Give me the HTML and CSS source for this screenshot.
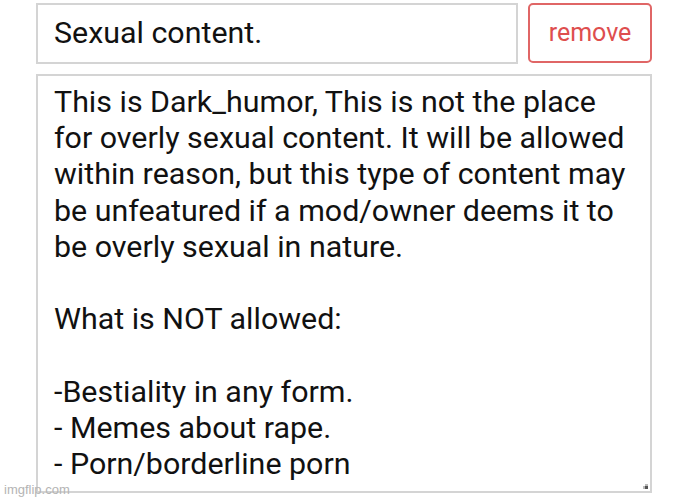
FILE: index.html
```html
<!DOCTYPE html>
<html>
<head>
<meta charset="utf-8">
<link rel="stylesheet" href="styles.css">
</head>
<body>
<div class="page">
  <div class="row">
    <div class="field">Sexual content.</div>
    <div class="remove">remove</div>
  </div>
  <div class="area">This is Dark_humor, This is not the place
for overly sexual content. It will be allowed
within reason, but this type of content may
be unfeatured if a mod/owner deems it to
be overly sexual in nature.

What is NOT allowed:

-Bestiality in any form.
- Memes about rape.
- Porn/borderline porn<span class="grip"></span></div>
</div>
<div class="watermark">imgflip.com</div>
</body>
</html>
```

FILE: styles.css
```css
html, body {
  margin: 0;
  padding: 0;
  background: #ffffff;
}
body {
  width: 689px;
  height: 500px;
  position: relative;
  overflow: hidden;
  font-family: Roboto, "Noto Sans", sans-serif;
  color: #111111;
}
.page {
  padding: 3px 37px 0 36px;
  display: flex;
  flex-direction: column;
  gap: 10px;
}
.row {
  display: flex;
  gap: 10px;
  height: 61px;
}
.field {
  flex: 1;
  border: 2px solid #d4d4d4;
  display: flex;
  align-items: center;
  padding: 0 0 0 16px;
  font-size: 30.4px;
  line-height: 1;
  box-sizing: border-box;
}
.remove {
  width: 124px;
  height: 60px;
  box-sizing: border-box;
  border: 2px solid #e06666;
  border-radius: 5px;
  color: #de4e4e;
  font-size: 25px;
  display: flex;
  align-items: center;
  justify-content: center;
  padding-bottom: 2px;
}
.area {
  position: relative;
  height: 419px;
  box-sizing: border-box;
  border: 2px solid #d4d4d4;
  padding: 8px 16px 0 16px;
  font-size: 30.4px;
  line-height: 36.2px;
  white-space: pre;
  overflow: hidden;
}
.grip {
  position: absolute;
  right: 2px;
  bottom: 2px;
  width: 3px;
  height: 3px;
  background: #555555;
  box-shadow: -2px 0 0 #bbbbbb, 0 -2px 0 #bbbbbb;
}
.watermark {
  position: absolute;
  left: 4px;
  top: 482px;
  font-family: "Liberation Sans", Arial, sans-serif;
  font-size: 13px;
  color: #b4b4b4;
}
```
